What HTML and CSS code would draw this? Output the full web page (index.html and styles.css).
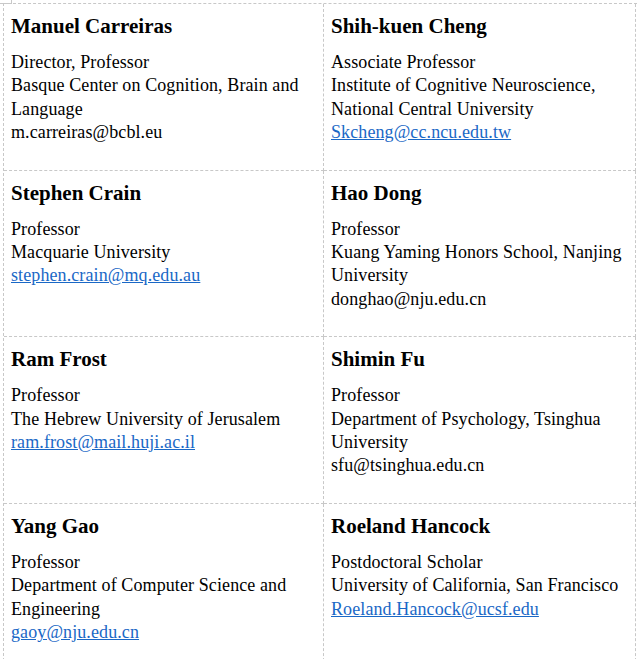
FILE: index.html
```html
<!DOCTYPE html>
<html lang="en">
<head>
<meta charset="utf-8">
<title>People</title>
<link rel="stylesheet" href="styles.css">
</head>
<body>
<span class="handle"></span>
<div class="table">
  <div class="cell">
    <h3 class="name">Manuel Carreiras</h3>
    <p class="info">Director, Professor<br>Basque Center on Cognition, Brain and Language<br>m.carreiras@bcbl.eu</p>
  </div>
  <div class="cell">
    <h3 class="name">Shih-kuen Cheng</h3>
    <p class="info">Associate Professor<br>Institute of Cognitive Neuroscience, National Central University<br><a href="#">Skcheng@cc.ncu.edu.tw</a></p>
  </div>
  <div class="cell">
    <h3 class="name">Stephen Crain</h3>
    <p class="info">Professor<br>Macquarie University<br><a href="#">stephen.crain@mq.edu.au</a></p>
  </div>
  <div class="cell">
    <h3 class="name">Hao Dong</h3>
    <p class="info">Professor<br>Kuang Yaming Honors School, Nanjing University<br>donghao@nju.edu.cn</p>
  </div>
  <div class="cell">
    <h3 class="name">Ram Frost</h3>
    <p class="info">Professor<br>The Hebrew University of Jerusalem<br><a href="#">ram.frost@mail.huji.ac.il</a></p>
  </div>
  <div class="cell">
    <h3 class="name">Shimin Fu</h3>
    <p class="info">Professor<br>Department of Psychology, Tsinghua University<br>sfu@tsinghua.edu.cn</p>
  </div>
  <div class="cell">
    <h3 class="name">Yang Gao</h3>
    <p class="info">Professor<br>Department of Computer Science and Engineering<br><a href="#">gaoy@nju.edu.cn</a></p>
  </div>
  <div class="cell">
    <h3 class="name">Roeland Hancock</h3>
    <p class="info">Postdoctoral Scholar<br>University of California, San Francisco<br><a href="#">Roeland.Hancock@ucsf.edu</a></p>
  </div>
</div>
</body>
</html>
```

FILE: styles.css
```css
html, body {
  margin: 0;
  padding: 0;
  background: #ffffff;
}

body {
  position: relative;
  height: 659px;
  overflow: hidden;
  font-family: "Liberation Serif", "Times New Roman", serif;
  color: #000000;
}

.handle {
  position: absolute;
  left: 0;
  top: 0;
  width: 11px;
  height: 3px;
  border-right: 1px solid #c8c8c8;
  border-bottom: 1px solid #c8c8c8;
}

.table {
  margin: 3px 0 0 3px;
  width: 633px;
  display: grid;
  grid-template-columns: 320px 312px;
  border-top: 1px dashed #c8c8c8;
  border-left: 1px dashed #c8c8c8;
}

.cell {
  box-sizing: border-box;
  padding: 10px 7px 25px 7px;
  border-right: 1px dashed #c8c8c8;
  border-bottom: 1px dashed #c8c8c8;
}

.name {
  margin: 0 0 13px 0;
  font-size: 21px;
  line-height: 24px;
  font-weight: bold;
}

.info {
  margin: 0;
  font-size: 18px;
  line-height: 23.4px;
  letter-spacing: 0.1px;
}

.info a {
  color: #1a68c6;
  text-decoration: underline;
}
```
